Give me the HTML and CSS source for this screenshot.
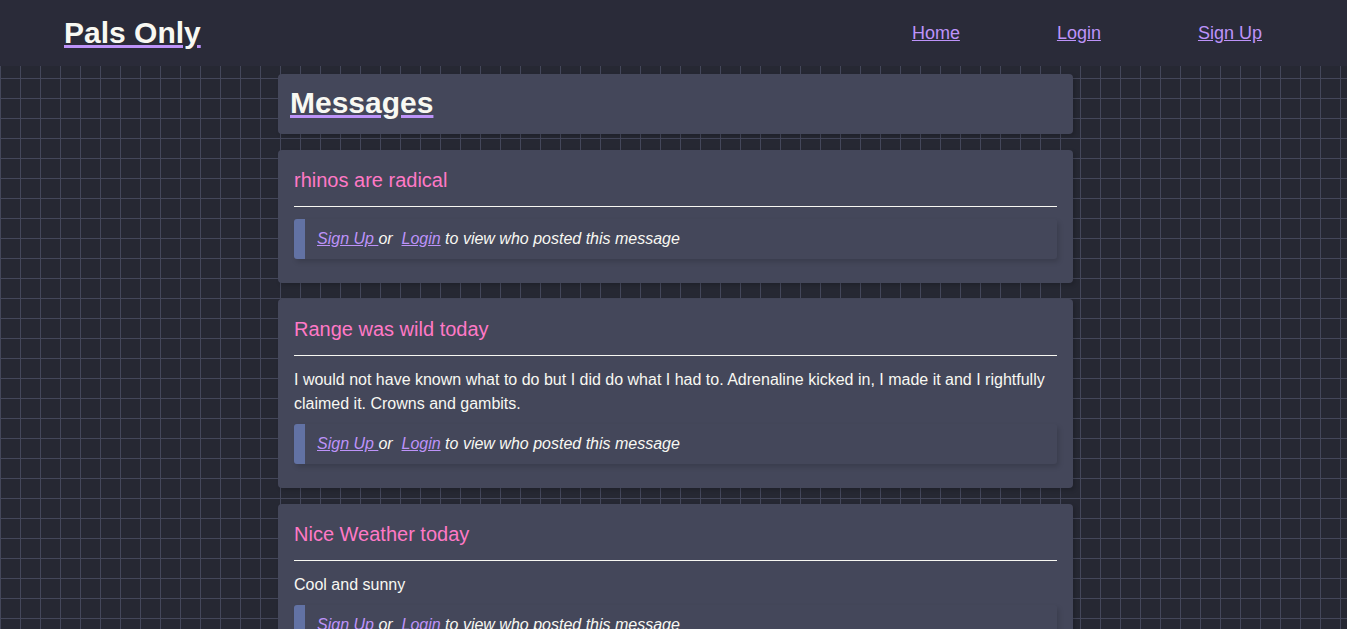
FILE: index.html
```html
<!DOCTYPE html>
<html lang="en">
<head>
  <meta charset="UTF-8">
  <meta name="viewport" content="width=device-width, initial-scale=1.0">
  <title>Pals Only</title>
  <link rel="stylesheet" href="styles.css">
</head>
<body>

  <header class="navbar">
    <a class="logo" href="#">Pals Only</a>
    <nav>
      <a href="#">Home</a>
      <a href="#">Login</a>
      <a href="#">Sign Up</a>
    </nav>
  </header>

  <main class="container">
    <div class="page-title">
      <h1><a href="#">Messages</a></h1>
    </div>

    <div class="message">
      <h3>rhinos are radical</h3>
      <hr>
      <blockquote>
        <a href="#">Sign Up </a> or&nbsp; <a href="#">Login</a> to view who posted this message
      </blockquote>
    </div>

    <div class="message">
      <h3>Range was wild today</h3>
      <hr>
      <p>I would not have known what to do but I did do what I had to. Adrenaline kicked in, I made it and I rightfully claimed it. Crowns and gambits.</p>
      <blockquote>
        <a href="#">Sign Up </a> or&nbsp; <a href="#">Login</a> to view who posted this message
      </blockquote>
    </div>

    <div class="message">
      <h3>Nice Weather today</h3>
      <hr>
      <p>Cool and sunny</p>
      <blockquote>
        <a href="#">Sign Up </a> or&nbsp; <a href="#">Login</a> to view who posted this message
      </blockquote>
    </div>
  </main>

</body>
</html>
```

FILE: styles.css
```css
* {
  margin: 0;
  padding: 0;
  box-sizing: border-box;
  font-family: 'Liberation Sans', Arial, sans-serif;
}

body {
  background-color: #262833;
  background-image:
    linear-gradient(to right, #44475a 1px, transparent 1px),
    linear-gradient(to bottom, #44475a 1px, transparent 1px);
  background-size: 20px 20px;
  background-position: 0 18px;
  color: #f8f8f2;
}

a {
  color: #bd93f9;
}

.navbar {
  display: flex;
  justify-content: space-between;
  align-items: center;
  height: 66px;
  padding: 0 85px 0 64px;
  background-color: #2a2b39;
}

.logo,
.page-title a {
  color: #f8f8f2;
  font-weight: 700;
  font-size: 30px;
  text-decoration: underline;
  text-decoration-color: #bd93f9;
  text-decoration-thickness: 3px;
}

nav {
  display: flex;
  gap: 97px;
}

nav a {
  font-size: 18px;
}

.container {
  width: 795px;
  margin: 8px 0 0 278px;
  display: flex;
  flex-direction: column;
  gap: 16px;
}

.page-title,
.message {
  background-color: #44475a;
  border-radius: 4px;
  box-shadow: 2px 2px 4px rgba(0, 0, 0, 0.18);
}

.page-title {
  padding: 12px 12px 14px;
}

.page-title h1 {
  line-height: 34px;
  font-size: 30px;
}

.message {
  padding: 16px;
}

.message h3 {
  color: #ff79c6;
  font-size: 20px;
  font-weight: 400;
  line-height: 24px;
  margin: 2px 0 14px;
}

hr {
  border: none;
  border-top: 1px solid #f8f8f2;
  margin-bottom: 12px;
}

.message p {
  font-size: 16px;
  line-height: 24px;
  margin-bottom: 8px;
}

blockquote {
  font-style: italic;
  font-size: 16px;
  line-height: 24px;
  padding: 8px 12px;
  border-left: 11px solid #6272a4;
  border-radius: 3px;
  box-shadow: 2px 3px 5px rgba(0, 0, 0, 0.15);
  margin-bottom: 8px;
}
```
